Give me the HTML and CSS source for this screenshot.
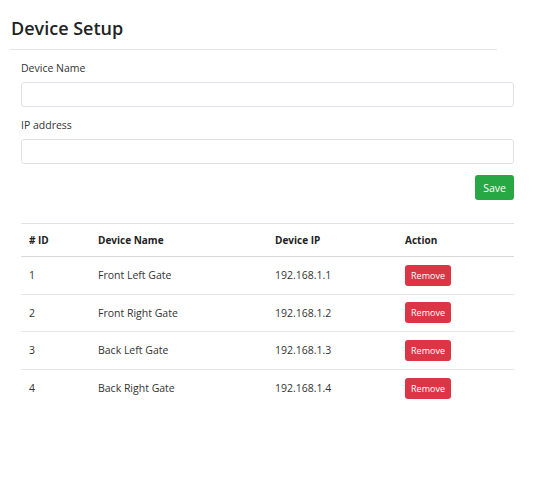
FILE: index.html
```html
<!DOCTYPE html>
<html>
<head>
<meta charset="utf-8">
<link rel="stylesheet" href="styles.css">
</head>
<body>
<div class="page">
  <h1 class="title">Device Setup</h1>
  <div class="rule"></div>
  <div class="content">
    <form class="form">
      <label class="label">Device Name</label>
      <div class="input"></div>
      <label class="label">IP address</label>
      <div class="input input-last"></div>
      <div class="actions"><button type="button" class="btn-save">Save</button></div>
    </form>
    <table class="devices">
      <thead>
        <tr><th class="c-id"># ID</th><th class="c-name">Device Name</th><th class="c-ip">Device IP</th><th>Action</th></tr>
      </thead>
      <tbody>
        <tr><td>1</td><td>Front Left Gate</td><td>192.168.1.1</td><td><button type="button" class="btn-remove">Remove</button></td></tr>
        <tr><td>2</td><td>Front Right Gate</td><td>192.168.1.2</td><td><button type="button" class="btn-remove">Remove</button></td></tr>
        <tr><td>3</td><td>Back Left Gate</td><td>192.168.1.3</td><td><button type="button" class="btn-remove">Remove</button></td></tr>
        <tr><td>4</td><td>Back Right Gate</td><td>192.168.1.4</td><td><button type="button" class="btn-remove">Remove</button></td></tr>
      </tbody>
    </table>
  </div>
</div>
</body>
</html>
```
FILE: styles.css
```css
* { box-sizing: border-box; }
html, body { margin: 0; padding: 0; background: #fff; }
body { font-family: "Open Sans", "Noto Sans", sans-serif; color: #212529; }
.page { width: 552px; height: 484px; padding-top: 15px; }
.title { margin: 0 0 0 11px; font-size: 18px; font-weight: 600; line-height: 26px; color: #222; }
.rule { margin: 8px 0 0 10px; width: 487px; height: 1px; background: #e4e6e8; }
.content { margin-left: 21px; width: 493px; }
.form { display: flex; flex-direction: column; margin: 0; padding-top: 11px; }
.label { font-size: 10.5px; line-height: 15px; color: #333; margin-bottom: 6px; }
.input { height: 25px; border: 1px solid #dee2e6; border-radius: 3px; margin-bottom: 11px; background: #fff; }
.input-last { margin-bottom: 11px; }
.actions { display: flex; justify-content: flex-end; }
.btn-save { background: #28a745; color: #fff; border: 0; border-radius: 3px; font-family: inherit; font-size: 10.5px; width: 39px; height: 25px; padding: 0; }
.devices { width: 493px; border-collapse: collapse; margin-top: 23px; font-size: 10.5px; color: #333; }
.devices th, .devices td { text-align: left; padding: 0 0 0 8px; vertical-align: middle; }
.devices thead tr { height: 33px; border-top: 1px solid #dee2e6; border-bottom: 1px solid #d6d9dc; }
.devices th { font-weight: 700; color: #222; font-size: 10px; }
.devices tbody tr { height: 37.5px; border-bottom: 1px solid #e4e6e8; }
.devices tbody tr:last-child { border-bottom: 0; }
.c-id { width: 69px; }
.c-name { width: 177px; }
.c-ip { width: 130px; }
.btn-remove { background: #dc3545; color: #fff; border: 0; border-radius: 3px; font-family: inherit; font-size: 9px; width: 46px; height: 21px; padding: 0; }
```
